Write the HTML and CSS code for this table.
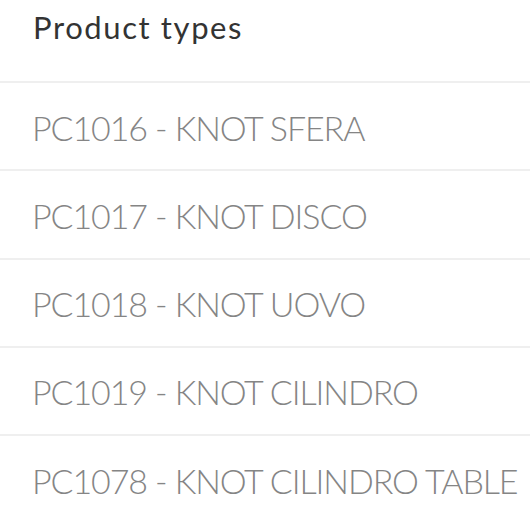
FILE: index.html
```html
<!DOCTYPE html>
<html>
<head>
<meta charset="utf-8">
<link rel="stylesheet" href="styles.css">
</head>
<body>
<div class="panel">
  <h1 class="title">Product types</h1>
  <ul class="list">
    <li class="item">PC1016 - KNOT SFERA</li>
    <li class="item">PC1017 - KNOT DISCO</li>
    <li class="item">PC1018 - KNOT UOVO</li>
    <li class="item">PC1019 - KNOT CILINDRO</li>
    <li class="item">PC1078 - KNOT CILINDRO TABLE</li>
  </ul>
</div>
</body>
</html>
```
FILE: styles.css
```css
html, body {
  margin: 0;
  padding: 0;
  background: #ffffff;
}
body {
  font-family: Lato, "Open Sans", sans-serif;
  overflow: hidden;
}
.panel {
  width: 530px;
}
.title {
  margin: 0;
  height: 83px;
  box-sizing: border-box;
  padding: 7px 0 0 33px;
  font-size: 31px;
  line-height: 40px;
  font-weight: 400;
  letter-spacing: 1.6px;
  color: #333333;
  border-bottom: 2px solid #efefef;
}
.list {
  list-style: none;
  margin: 0;
  padding: 0;
}
.item {
  height: 88.25px;
  box-sizing: border-box;
  display: flex;
  align-items: center;
  padding: 2px 0 0 32px;
  font-size: 34px;
  font-weight: 300;
  letter-spacing: -1.1px;
  color: #858585;
  border-bottom: 2px solid #efefef;
  white-space: nowrap;
}
```
